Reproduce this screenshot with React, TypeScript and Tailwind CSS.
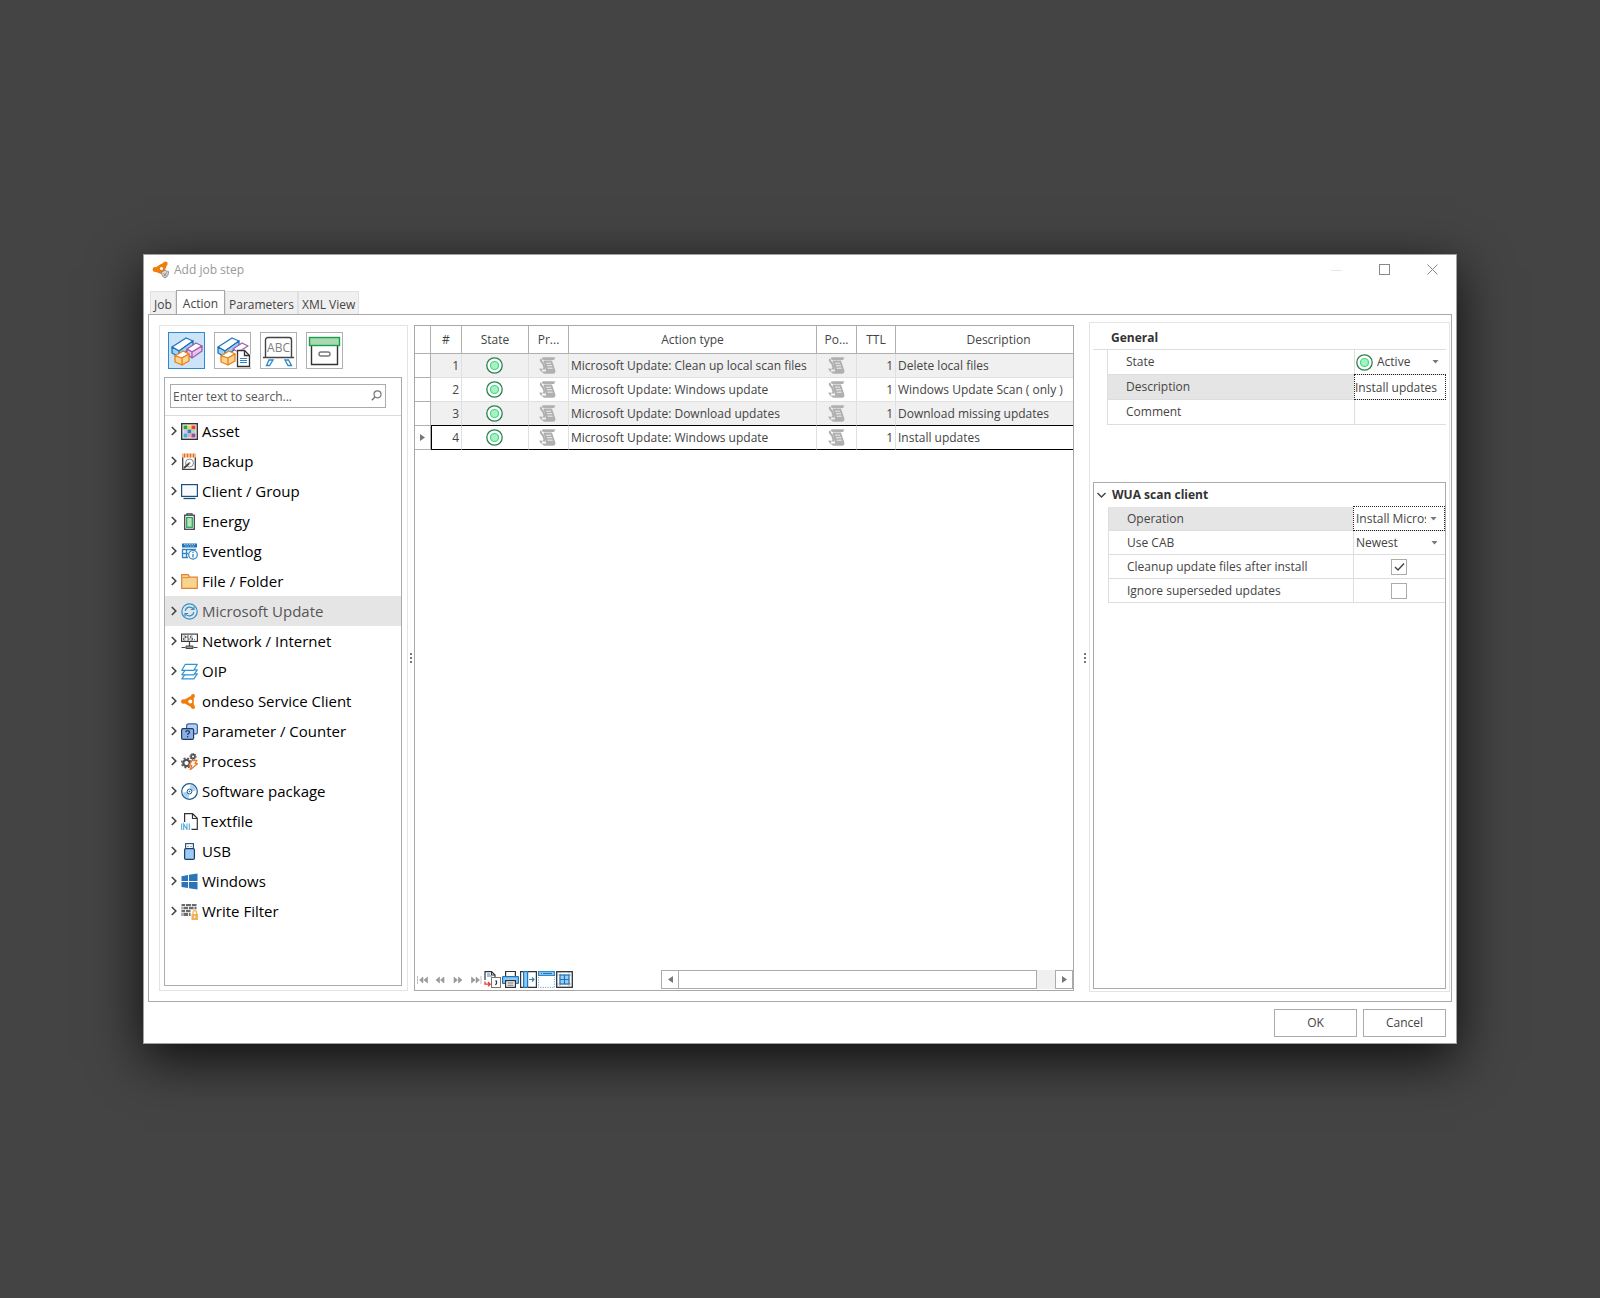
import { useState } from "react";
import type { ReactNode } from "react";
import clsx from "clsx";

/* ---------- icons ---------- */

function Icon({ children, size = 17 }: { children: ReactNode; size?: number }) {
  return (
    <svg width={size} height={size} viewBox={`0 0 ${size} ${size}`} fill="none" className="block shrink-0" aria-hidden="true">
      {children}
    </svg>
  );
}

function AppIcon() {
  return (
    <Icon size={18}>
      <path d="M2.5 8.5 13 2.5M2.5 9 9 11.5M13 3v3" stroke="#f07d0a" strokeWidth="2.6" strokeLinecap="round" />
      <circle cx="9.5" cy="7.5" r="2.8" fill="#fff" stroke="#f07d0a" strokeWidth="2.4" />
      <circle cx="3" cy="8.5" r="2.4" fill="#f07d0a" />
      <circle cx="13.5" cy="2.8" r="2.2" fill="#f07d0a" />
      <path d="M9.5 10.5c1.5 0 2.5-.5 3.5-1.5 1 1 2 1.5 3.5 1.5 0 3-1 5.5-3.5 6.5-2.5-1-3.5-3.5-3.5-6.5z" fill="#d6d6d6" stroke="#8a8a8a" />
      <path d="m11.5 12.5 3 2.5M14.5 11.5 12 15" stroke="#8a8a8a" />
    </Icon>
  );
}

function ChevronRight() {
  return (
    <svg width="6" height="10" viewBox="0 0 6 10" fill="none" className="shrink-0" aria-hidden="true">
      <path d="M.8 1 4.8 5l-4 4" stroke="#444" strokeWidth="1.6" />
    </svg>
  );
}

function Blocks({ small = false }: { small?: boolean }) {
  return (
    <g strokeLinejoin="round" strokeWidth="1.3">
      <g stroke="#1e75bb">
        <path d="m4 15 14-9 7 3-14 10z" fill="#fff" />
        <path d="M4 15v6l7 4v-6zM11 19l14-10v5L11 25z" fill="#9fd0f5" />
      </g>
      <g stroke="#a45cab">
        <path d="m19 17 9-6 6 3-10 6z" fill="#fff" />
        {!small && <path d="M19 17v5l5 4v-6zM24 20l10-6v5l-10 7z" fill="#e8c5ec" />}
      </g>
      <g stroke="#e8811c">
        <path d="m7 24 8-5 6 3-7 4z" fill="#fff" />
        <path d="M7 24v6l7 3v-7zM14 26l7-4v7l-7 4z" fill="#fbd591" />
      </g>
    </g>
  );
}

function BlocksIcon() {
  return <Icon size={37}><Blocks /></Icon>;
}

function BlocksDocIcon() {
  return (
    <Icon size={37}>
      <Blocks small />
      <path d="M24 19h7l5 5v10H24z" fill="#fff" stroke="#fff" strokeWidth="3" />
      <path d="M23.5 18.5h7l5 5v11h-12z" fill="#fff" stroke="#333" strokeWidth="1.3" />
      <path d="M30.5 18.5v5h5" stroke="#333" strokeWidth="1.3" />
      <path d="M26 26.500h7M26 28.500h7M26 30.500h7" stroke="#2f86c8" />
    </Icon>
  );
}

function BoardIcon() {
  return (
    <Icon size={37}>
      <path d="M5.500 25V8A2.500 2.500 0 0 1 8 5.500h21A2.500 2.500 0 0 1 31.500 8v17" stroke="#444" strokeWidth="1.4" />
      <path d="M3 25.500h31" stroke="#444" strokeWidth="1.5" />
      <text x="18.5" y="19.5" textAnchor="middle" fontSize="12" fill="#808080" fontFamily="'Open Sans', sans-serif">ABC</text>
      <path d="M9 28h4l-3.500 5.500h-3zM25 28h3.500l3 5.500H28z" fill="#fff" stroke="#2f86c8" strokeWidth="1.3" />
    </Icon>
  );
}

function ArchiveIcon() {
  return (
    <Icon size={37}>
      <path d="M5.500 14v18.500h26V14" stroke="#333" strokeWidth="1.4" fill="#fff" />
      <rect x="3.5" y="5.5" width="30" height="8" fill="#abd8b2" stroke="#16a04a" strokeWidth="1.4" />
      <rect x="13" y="20" width="11" height="4" rx="2" stroke="#777" strokeWidth="1.4" />
    </Icon>
  );
}

function SearchIcon() {
  return (
    <svg width="11" height="11" viewBox="0 0 11 11" fill="none" className="pointer-events-none absolute right-1 top-1.5" aria-hidden="true">
      <circle cx="6.5" cy="4.3" r="3.5" stroke="#777" strokeWidth="1.2" />
      <path d="M4 7 .8 10.2" stroke="#777" strokeWidth="1.5" />
    </svg>
  );
}

function AssetIcon() {
  const cells = ["#20a64a", "#f5d34f", "#e8413c", "#e6bdea", "#2f86c8", "#a5dcb0", "#33b5e0", "#f0a6b0", "#9a4aa6"];
  return (
    <Icon>
      <rect x=".7" y=".7" width="15.6" height="15.6" fill="#f4fbf6" stroke="#333" strokeWidth="1.4" />
      {cells.map((c, i) => (
        <rect key={c} x={2.5 + (i % 3) * 4} y={2.5 + Math.floor(i / 3) * 4} width="4" height="4" fill={c} />
      ))}
    </Icon>
  );
}

function BackupIcon() {
  return (
    <Icon>
      <path d="M1.700 4v12.300h12.600V4" stroke="#444" strokeWidth="1.3" fill="#fff" />
      <path d="M1 .5h14v4H1z" fill="#f6b98b" />
      <path d="M3.500.5v4M6.500.5v4M9.500.5v4M12.500.5v4" stroke="#e06f23" />
      <circle cx="8.5" cy="10" r="4" stroke="#888" />
      <circle cx="8.5" cy="10" r="1" fill="#888" />
      <path d="m3 15 5-4.500" stroke="#444" strokeWidth="1.8" />
    </Icon>
  );
}

function ClientIcon() {
  return (
    <Icon>
      <rect x=".6" y="1.6" width="15.8" height="11.8" fill="#f8fbfe" stroke="#1f5079" strokeWidth="1.2" />
      <path d="M2.500 15.500h12" stroke="#1f5079" strokeWidth="1.3" />
    </Icon>
  );
}

function EnergyIcon() {
  return (
    <Icon>
      <path d="M6 2V.8h5V2" stroke="#444" strokeWidth="1.3" />
      <rect x="3.7" y="2.2" width="9.6" height="14.1" fill="#fff" stroke="#444" strokeWidth="1.3" />
      <rect x="5.7" y="4.5" width="5.6" height="9.8" fill="#b9e2bf" stroke="#1ea355" strokeWidth="1.2" />
    </Icon>
  );
}

function EventlogIcon() {
  return (
    <Icon>
      <path d="M1 .5h15v4H1z" fill="#2471b5" />
      <path d="M3 1.500h11M4 3h9" stroke="#cfe5f7" strokeWidth=".7" strokeDasharray="1.5 1" />
      <path d="M1 6.500h14M1 10.500h6M1 14.500h6M1.500 6.500v8M5.500 6.500v8" stroke="#2f86c8" strokeWidth="1.3" />
      <circle cx="12" cy="11.8" r="4.3" fill="#fff" stroke="#2f86c8" strokeWidth="1.2" />
      <path d="M12 11v3.500M12 8.800V10" stroke="#2f86c8" strokeWidth="1.3" />
    </Icon>
  );
}

function FolderIcon() {
  return (
    <Icon>
      <path d="M.7 15.300V1.700h6.500l1.500 2.500h7.600v11.100z" fill="#f7d58d" stroke="#e0823a" strokeWidth="1.2" />
      <path d="M1.500 4.700H7l1.500-1" stroke="#e0823a" />
    </Icon>
  );
}

function UpdateIcon() {
  return (
    <Icon>
      <circle cx="8.5" cy="8.5" r="7.7" stroke="#2f8fce" strokeWidth="1.2" />
      <path d="M4.200 8A4.500 4.500 0 0 1 12.500 6.200M12.800 9A4.500 4.500 0 0 1 4.500 10.800" stroke="#2f8fce" strokeWidth="1.2" />
      <path d="M13 3.500v3H9.800M4 13.500v-3h3.200" stroke="#2f8fce" strokeWidth="1.2" />
    </Icon>
  );
}

function NetworkIcon() {
  return (
    <Icon>
      <rect x=".6" y="1.1" width="15.8" height="7.3" fill="#fff" stroke="#333" strokeWidth="1.1" />
      <path d="M2.500 3h2v2h-2v2h2M8 3H6v2h2v2H6M11.500 3h-2v2h2v2h-2M13 6.700h1" stroke="#444" strokeWidth=".8" />
      <path d="M8.500 8.500V13M.5 14.500h4M12.500 14.500h4" stroke="#444" strokeWidth="1.2" />
      <path d="M5 13h7v2.500H5z" fill="#999" stroke="#444" />
    </Icon>
  );
}

function LayersIcon() {
  return (
    <Icon>
      <g stroke="#2f95d0" strokeWidth="1.2" strokeLinejoin="round">
        <path d="m.8 15.800 3.500-5h12l-3.500 5z" fill="#fff" />
        <path d="m.8 11.800 3.500-5h12l-3.500 5z" fill="#fff" />
        <path d="m.8 7.300 3.500-6h12l-3.500 6z" fill="#fff" />
      </g>
    </Icon>
  );
}

function OndesoIcon() {
  return (
    <Icon>
      <path d="M2.200 8.500 11.800 3.200v10.600z" stroke="#f07d0a" strokeWidth="2" fill="#f07d0a" />
      <circle cx="2.3" cy="8.5" r="2.2" fill="#f07d0a" />
      <circle cx="12" cy="3" r="2" fill="#f07d0a" />
      <circle cx="12" cy="14" r="2" fill="#f07d0a" />
      <circle cx="9.3" cy="8.5" r="2" fill="#fff" />
    </Icon>
  );
}

function ParameterIcon() {
  return (
    <Icon>
      <rect x="5.6" y=".9" width="10.8" height="10" rx="2" fill="#b7cff5" stroke="#3267a8" strokeWidth="1.2" />
      <rect x=".6" y="5.6" width="12" height="10.8" rx="1.5" fill="#8db1e6" stroke="#213a5f" strokeWidth="1.2" />
      <path d="M4.800 9.200c0-2 3.700-2 3.700 0 0 1.300-1.900 1.200-1.900 2.700M6.600 13v1.300" stroke="#213a5f" strokeWidth="1.3" />
    </Icon>
  );
}

function ProcessIcon() {
  return (
    <Icon>
      <circle cx="5.5" cy="10" r="3.2" stroke="#555" strokeWidth="2.2" />
      <circle cx="5.5" cy="10" r="4.8" stroke="#555" strokeWidth="1.5" strokeDasharray="1.9 1.9" />
      <circle cx="12" cy="3.5" r="2" stroke="#555" strokeWidth="1.8" />
      <circle cx="12" cy="3.5" r="3.2" stroke="#555" strokeDasharray="1.2 1.2" />
      <path d="M11 7.500h5l-2 3.200h2.500L9 17l1.800-4.500H8.200z" fill="#fff" stroke="#ee7a2d" strokeWidth="1.3" strokeLinejoin="round" />
    </Icon>
  );
}

function DiscIcon() {
  return (
    <Icon>
      <circle cx="8.5" cy="8.5" r="7.8" fill="#fff" stroke="#1f5c92" strokeWidth="1.2" />
      <path d="M8.500 8.500 9.500 2A6.600 6.600 0 0 1 15 7.500zM8.500 8.500 7.500 15A6.600 6.600 0 0 1 2 9.500z" fill="#a5d0f3" />
      <circle cx="8.5" cy="8.5" r="2.4" fill="#fff" stroke="#1f5c92" />
      <circle cx="8.5" cy="8.5" r=".8" fill="#1f5c92" />
    </Icon>
  );
}

function TextfileIcon() {
  return (
    <Icon>
      <path d="M3.600 9V.7h8l4.700 4.500v11.100h-5.800" stroke="#333" strokeWidth="1.2" />
      <path d="M11.500 1v4.500H16" stroke="#333" strokeWidth="1.2" />
      <path d="M.7 10.500V17M2.700 17v-6L6 16.500v-6M8.300 10.500V17" stroke="#58a9dc" strokeWidth="1.1" />
    </Icon>
  );
}

function UsbIcon() {
  return (
    <Icon>
      <rect x="4.6" y=".6" width="7.8" height="6" fill="#fff" stroke="#2a5a8c" strokeWidth="1.2" />
      <path d="M6.500 3.500h1M9.500 3.500h1" stroke="#2a5a8c" />
      <rect x="3.6" y="5.6" width="9.8" height="10.8" rx="1.2" fill="#9bcbf7" stroke="#1d3f66" strokeWidth="1.2" />
    </Icon>
  );
}

function WindowsIcon() {
  return (
    <Icon>
      <path d="M.5 3.200 7 2v6H.5zM8 1.800 16.500.5V8H8zM.5 9H7v6L.5 14zM8 9h8.500v7.500L8 15.200z" fill="#2b74b8" />
    </Icon>
  );
}

function WriteFilterIcon() {
  return (
    <Icon>
      <path d="M.5 1h15v12H.5z" fill="#6b6b6b" />
      <path d="M0 3.500h16M0 6.500h16M0 9.500h16" stroke="#fff" strokeWidth=".7" />
      <path d="M4.500 1v2.500M10.500 1v2.500M2 3.500v3M7.500 3.500v3M13 3.500v3M4.500 6.500v3M10.500 6.500v3M2 9.500V13M7.500 9.500V13" stroke="#fff" strokeWidth=".9" />
      <path d="M9.500 7h7.500v10H9.500z" fill="#fff" />
      <rect x="10.5" y="11" width="6.500" height="6" fill="#f0b158" />
      <path d="M12 11V9.500a1.800 1.800 0 0 1 3.600 0V11" stroke="#f0b158" strokeWidth="1.3" />
      <path d="M13.700 12.700V15" stroke="#fff" strokeWidth="1.1" />
    </Icon>
  );
}

function StateIcon() {
  return (
    <Icon>
      <circle cx="8.5" cy="8.5" r="7.7" fill="#fff" stroke="#2d8050" strokeWidth="1.3" />
      <circle cx="8.5" cy="8.5" r="4" fill="#a6f2c2" stroke="#3fdc7c" strokeWidth="1.2" />
    </Icon>
  );
}

function ScriptIcon() {
  return (
    <Icon>
      <path d="M3 .8C5 0 9 .4 16.500.4L15 3H5C3.500 3 2 2 3 .8z" fill="#b0b0b0" />
      <path d="M2 2C.8 4.500 3.500 5 4.300 7l1.200 4-1 1.500" stroke="#b0b0b0" strokeWidth="2" />
      <path d="M4.500 3.500H13L16.200 13c.8 2.200-.4 3.700-2.200 3.700H6c-1.800 0-3-1-3-2.200h4z" fill="#b0b0b0" />
      <path d="M7.200 6.200H12M8 8.700h5M8.700 11.200h5" stroke="#f4f4f4" strokeWidth=".9" />
      <path d="m.2 11.600 3.600.2-1.600 3.400z" fill="#b0b0b0" />
    </Icon>
  );
}

function ExportIcon() {
  return (
    <Icon>
      <path d="M1 9V.6h6.500L11 4v3" stroke="#333" strokeWidth="1.2" />
      <path d="M7.500.6V4H11" stroke="#333" />
      <path d="M3 3h3M3 5h5" stroke="#2f86c8" />
      <path d="M1 10.500v2.700h4.500M4 11l2.200 2.200L4 15.400" stroke="#e23b3b" strokeWidth="1.3" />
      <rect x="7.500" y="6.500" width="9" height="10" fill="#fff" stroke="#777" />
      <path d="M11.200 10h1.300v2.300l-1 1.700" stroke="#333" strokeWidth="1.2" />
    </Icon>
  );
}

function PrinterIcon() {
  return (
    <Icon>
      <path d="M3.600 5.500v-5h9.800v5" fill="#fff" stroke="#333" strokeWidth="1.2" />
      <rect x=".6" y="5.6" width="15.8" height="6.8" rx=".5" fill="#8cc8f5" stroke="#1e75bb" strokeWidth="1.2" />
      <path d="M3.600 9.600h9.800v6.800H3.600z" fill="#fff" stroke="#333" strokeWidth="1.2" />
      <path d="M5.500 12h6M5.500 14.200h6" stroke="#666" />
    </Icon>
  );
}

function ColumnsIcon() {
  return (
    <Icon>
      <path d="M.6 0v17M.6.6H4M.6 16.400H4M8 .6h8.400v15.800H8" stroke="#333" strokeWidth="1.2" />
      <rect x="3.6" y=".6" width="4" height="15.8" fill="#8cc8f5" stroke="#1e75bb" strokeWidth="1.2" />
      <path d="M9 8.500h5M12 6.500l2 2-2 2" stroke="#2f86c8" strokeWidth="1.2" />
    </Icon>
  );
}

function HeaderIcon() {
  return (
    <Icon>
      <rect x=".6" y=".6" width="15.8" height="3.8" fill="#9ed0f5" stroke="#2f86c8" strokeWidth="1.2" />
      <path d="M3 2.500h1M5 2.500h9" stroke="#1e75bb" />
      <path d="M.6 6v10.400h15.800V6" stroke="#6ca7d4" strokeDasharray="1.2 1.2" />
    </Icon>
  );
}

function GridIcon() {
  return (
    <Icon>
      <rect x=".7" y=".7" width="15.6" height="15.6" fill="#fff" stroke="#333" strokeWidth="1.3" />
      <path d="M1 4h15M1 13h15M4 1v15M13 1v15" stroke="#999" strokeDasharray="1.5 1" />
      <rect x="4" y="4" width="9" height="9" fill="#9ed0f5" stroke="#1e75bb" strokeWidth="1.2" />
      <path d="M8.500 4v9M4 8.500h9" stroke="#1e75bb" strokeWidth="1.2" />
    </Icon>
  );
}

function Triangle({ dir }: { dir: "left" | "right" }) {
  return (
    <svg width="5" height="7" viewBox="0 0 5 7" className="block" aria-hidden="true">
      <path d={dir === "left" ? "M5 0v7L0 3.5z" : "M0 0v7l5-3.5z"} fill="#777" />
    </svg>
  );
}

/* ---------- data ---------- */

const tabs = ["Job", "Action", "Parameters", "XML View"];

const tools = [
  { name: "Actions", icon: <BlocksIcon /> },
  { name: "Action templates", icon: <BlocksDocIcon /> },
  { name: "Texts", icon: <BoardIcon /> },
  { name: "Archive", icon: <ArchiveIcon /> },
];

const categories = [
  { name: "Asset", icon: <AssetIcon /> },
  { name: "Backup", icon: <BackupIcon /> },
  { name: "Client / Group", icon: <ClientIcon /> },
  { name: "Energy", icon: <EnergyIcon /> },
  { name: "Eventlog", icon: <EventlogIcon /> },
  { name: "File / Folder", icon: <FolderIcon /> },
  { name: "Microsoft Update", icon: <UpdateIcon /> },
  { name: "Network / Internet", icon: <NetworkIcon /> },
  { name: "OIP", icon: <LayersIcon /> },
  { name: "ondeso Service Client", icon: <OndesoIcon /> },
  { name: "Parameter / Counter", icon: <ParameterIcon /> },
  { name: "Process", icon: <ProcessIcon /> },
  { name: "Software package", icon: <DiscIcon /> },
  { name: "Textfile", icon: <TextfileIcon /> },
  { name: "USB", icon: <UsbIcon /> },
  { name: "Windows", icon: <WindowsIcon /> },
  { name: "Write Filter", icon: <WriteFilterIcon /> },
];

const steps = [
  { id: 1, action: "Microsoft Update: Clean up local scan files", ttl: 1, description: "Delete local files" },
  { id: 2, action: "Microsoft Update: Windows update", ttl: 1, description: "Windows Update Scan ( only )" },
  { id: 3, action: "Microsoft Update: Download updates", ttl: 1, description: "Download missing updates" },
  { id: 4, action: "Microsoft Update: Windows update", ttl: 1, description: "Install updates" },
];

const navButtons = [
  { name: "First", d: "M.5 0v8M6 1v6L2.500 4zM10.500 1v6L7 4z" },
  { name: "Previous page", d: "M4.500 1v6L1 4zM9 1v6L5.500 4z" },
  { name: "Next page", d: "M1 1v6l3.500-3zM5.500 1v6L9 4z" },
  { name: "Last", d: "M.5 1v6L4 4zM5 1v6l3.500-3zM10 0v8" },
];

const gridTools = [
  { name: "Export", icon: <ExportIcon /> },
  { name: "Print", icon: <PrinterIcon /> },
  { name: "Best fit columns", icon: <ColumnsIcon /> },
  { name: "Group panel", icon: <HeaderIcon /> },
  { name: "Grid view", icon: <GridIcon /> },
];

/* ---------- parts ---------- */

function Splitter({ className }: { className?: string }) {
  return (
    <div className={clsx("flex shrink-0 flex-col justify-center gap-0.5", className)}>
      <span className="size-0.5 bg-[#777]" />
      <span className="size-0.5 bg-[#777]" />
      <span className="size-0.5 bg-[#777]" />
    </div>
  );
}

function TitleBar() {
  return (
    <header className="flex h-[35px] items-start pl-1 pr-3.5 pt-1.5">
      <AppIcon />
      <h1 className="ml-1 leading-[18px] text-[#999]">Add job step</h1>
      <div className="ml-auto mt-[3px] flex gap-[37px]">
        <button aria-label="Minimize" disabled>
          <Icon size={11}><path d="M0 6.500h11" stroke="#e6e6e6" /></Icon>
        </button>
        <button aria-label="Maximize">
          <Icon size={11}><rect x=".5" y=".5" width="10" height="10" stroke="#888" /></Icon>
        </button>
        <button aria-label="Close">
          <Icon size={11}><path d="m.5.5 10 10M10.500.5l-10 10" stroke="#888" /></Icon>
        </button>
      </div>
    </header>
  );
}

function ActionTree() {
  const [selected, setSelected] = useState("Microsoft Update");
  return (
    <aside className="my-2.5 flex w-[249px] shrink-0 flex-col border border-[#e4e4e4]">
      <div className="flex gap-[9px] pl-2 pt-1.5">
        {tools.map((t, i) => (
          <button
            key={t.name}
            aria-label={t.name}
            className={clsx("flex size-[37px] items-center justify-center border", i === 0 ? "border-[#3088cf] bg-[#cce4f7]" : "border-[#b0b0b0] bg-white")}
          >
            {t.icon}
          </button>
        ))}
      </div>
      <div className="mb-1 ml-1 mr-[5px] mt-2 flex-1 border border-[#ababab]">
        <div className="border-b border-[#dcdcdc] pb-[7px] pl-[5px] pr-[15px] pt-1.5">
          <div className="relative">
            <input
              type="text"
              aria-label="Search actions"
              placeholder="Enter text to search..."
              className="block h-6 w-full border border-[#ababab] pl-0.5 pr-5 text-[12px] text-[#444] outline-none placeholder:text-[#555]"
            />
            <SearchIcon />
          </div>
        </div>
        <ul>
          {categories.map((c) => (
            <li key={c.name}>
              <button
                onClick={() => setSelected(c.name)}
                className={clsx("flex h-[30px] w-full items-center gap-1 pl-1.5 text-left text-[15px]", c.name === selected ? "bg-[#e5e5e5] text-[#555]" : "text-black")}
              >
                <ChevronRight />
                {c.icon}
                <span>{c.name}</span>
              </button>
            </li>
          ))}
        </ul>
      </div>
    </aside>
  );
}

function StepTable() {
  const th = "border-b border-r border-[#b0b0b0] font-normal";
  return (
    <table className="w-full min-w-[687px] table-fixed border-separate border-spacing-0">
      <colgroup>
        <col className="w-4" />
        <col className="w-[31px]" />
        <col className="w-[67px]" />
        <col className="w-10" />
        <col className="w-[248px]" />
        <col className="w-10" />
        <col className="w-[39px]" />
        <col />
      </colgroup>
      <thead>
        <tr className="h-7">
          <th className={th} />
          <th className={th}>#</th>
          <th className={th}>State</th>
          <th className={th}>Pr...</th>
          <th className={th}>Action type</th>
          <th className={th}>Po...</th>
          <th className={th}>TTL</th>
          <th className={th}>Description</th>
        </tr>
      </thead>
      <tbody>
        {steps.map((s, i) => {
          const td = clsx("border-b border-r border-r-[#e0e0e0]", i < 2 ? "border-b-[#e0e0e0]" : "border-b-black");
          return (
            <tr key={s.id} className={clsx("h-6", i % 2 === 0 ? "bg-[#f0f0f0]" : "bg-white")}>
              <td className="border-b border-r border-[#b0b0b0] bg-white">
                {i === 3 && <div className="flex justify-center"><Triangle dir="right" /></div>}
              </td>
              <td className={clsx(td, "pr-0.5 text-right", i === 3 && "border-l border-l-black")}>{s.id}</td>
              <td className={td}><div className="flex justify-center pr-0.5"><StateIcon /></div></td>
              <td className={td}><div className="flex justify-center pr-0.5"><ScriptIcon /></div></td>
              <td className={clsx(td, "truncate pl-0.5")}>{s.action}</td>
              <td className={td}><div className="flex justify-center"><ScriptIcon /></div></td>
              <td className={clsx(td, "pr-0.5 text-right")}>{s.ttl}</td>
              <td className={clsx(td, "pl-0.5")}>{s.description}</td>
            </tr>
          );
        })}
      </tbody>
    </table>
  );
}

function StepGrid() {
  return (
    <section className="my-2.5 flex min-w-0 flex-1 flex-col overflow-hidden border border-[#a8a8a8]">
      <StepTable />
      <div className="mt-auto flex h-5 items-start pl-0.5">
        <div className="flex h-[19px] items-center gap-[7px]">
          {navButtons.map((b) => (
            <button key={b.name} aria-label={b.name}>
              <svg width="11" height="8" viewBox="0 0 11 8" fill="#999" stroke="#999" strokeWidth=".6" className="block">
                <path d={b.d} />
              </svg>
            </button>
          ))}
        </div>
        <div className="ml-0.5 flex gap-px pt-px">
          {gridTools.map((t) => (
            <button key={t.name} aria-label={t.name}>{t.icon}</button>
          ))}
        </div>
        <div className="ml-[88px] flex h-[19px] flex-1 bg-[#f0f0f0]">
          <button aria-label="Scroll left" className="flex w-[18px] items-center justify-center border border-[#ababab] bg-white">
            <Triangle dir="left" />
          </button>
          <div className="flex-1 border border-l-0 border-[#ababab] bg-white" />
          <button aria-label="Scroll right" className="ml-[18px] flex w-[18px] items-center justify-center border border-[#ababab] bg-white">
            <Triangle dir="right" />
          </button>
        </div>
      </div>
    </section>
  );
}

function DropArrow() {
  return (
    <div className="pointer-events-none absolute inset-y-0 right-[7px] flex items-center">
      <svg width="7" height="4" viewBox="0 0 7 4" aria-hidden="true">
        <path d="M.5 0h6l-3 3.500z" fill="#777" />
      </svg>
    </div>
  );
}

function PropertyRow({ id, label, active, tall, children }: { id: string; label: string; active?: boolean; tall?: boolean; children: ReactNode }) {
  return (
    <div className={clsx("flex border-b border-[#dedede]", tall ? "h-[25px]" : "h-6")}>
      <div className="-mb-px w-[15px] shrink-0 border-r border-[#dedede] bg-white" />
      <label htmlFor={id} className={clsx("flex flex-1 items-center pl-[18px]", active && "bg-[#e5e5e5]")}>{label}</label>
      <div
        className={clsx(
          "relative flex w-[92px] shrink-0 items-center",
          active ? "-my-px border border-dotted border-[#222]" : "border-l border-[#dedede]",
        )}
      >
        {children}
      </div>
    </div>
  );
}

function Properties() {
  const select = "h-full w-full appearance-none overflow-hidden bg-transparent pl-0.5 pr-[18px] text-clip whitespace-nowrap text-[#444] outline-none";
  const check = "peer size-4 appearance-none border border-[#ababab] bg-white";
  return (
    <aside className="mb-[9px] mt-[7px] flex w-[361px] shrink-0 flex-col border border-[#e4e4e4] px-[3px] pb-0.5">
      <section>
        <h2 className="flex h-[27px] items-center border-b border-[#dedede] pl-[18px] pt-1 font-bold text-[#333]">General</h2>
        <PropertyRow id="state" label="State" tall>
          <div className="pl-px"><StateIcon /></div>
          <select id="state" className={clsx(select, "ml-0.5")}>
            <option>Active</option>
            <option>Inactive</option>
          </select>
          <DropArrow />
        </PropertyRow>
        <PropertyRow id="description" label="Description" active tall>
          <input id="description" type="text" defaultValue="Install updates" className="h-full w-full outline-none" />
        </PropertyRow>
        <PropertyRow id="comment" label="Comment" tall>
          <input id="comment" type="text" className="h-full w-full pl-0.5 outline-none" />
        </PropertyRow>
      </section>
      <section className="mt-[57px] flex-1 border border-[#ababab]">
        <h2 className="flex h-6 items-center gap-1.5 pl-[3px] font-bold text-[#333]">
          <svg width="9" height="6" viewBox="0 0 9 6" fill="none" aria-hidden="true">
            <path d="m.5 1 4 4 4-4" stroke="#444" strokeWidth="1.4" />
          </svg>
          WUA scan client
        </h2>
        <PropertyRow id="operation" label="Operation" active>
          <select id="operation" className={select}>
            <option>Install Microsoft updates</option>
          </select>
          <DropArrow />
        </PropertyRow>
        <PropertyRow id="cab" label="Use CAB">
          <select id="cab" className={select}>
            <option>Newest</option>
          </select>
          <DropArrow />
        </PropertyRow>
        <PropertyRow id="cleanup" label="Cleanup update files after install">
          <div className="flex w-full justify-center pr-0.5">
            <div className="relative">
              <input id="cleanup" type="checkbox" defaultChecked className={clsx(check, "block")} />
              <svg width="16" height="16" viewBox="0 0 16 16" fill="none" className="pointer-events-none absolute inset-0 hidden peer-checked:block">
                <path d="m4 8 3 3 6-6.500" stroke="#444" strokeWidth="1.4" />
              </svg>
            </div>
          </div>
        </PropertyRow>
        <PropertyRow id="superseded" label="Ignore superseded updates">
          <div className="flex w-full justify-center pr-0.5">
            <input id="superseded" type="checkbox" className={check} />
          </div>
        </PropertyRow>
      </section>
    </aside>
  );
}

export default function App() {
  const [tab, setTab] = useState("Action");
  return (
    <main className="flex min-h-screen bg-[#444] px-[143px] py-[254px] font-['Open_Sans','Noto_Sans',sans-serif] text-[12px] leading-4 text-[#444]">
      <div role="dialog" aria-label="Add job step" className="flex min-w-0 flex-1 flex-col border border-[#a0a0a0] bg-white px-1 shadow-[0_15px_50px_rgba(0,0,0,0.8)]">
        <TitleBar />
        <div role="tablist" className="flex h-6 items-end pl-0.5">
          {tabs.map((t) => (
            <button
              key={t}
              role="tab"
              aria-selected={t === tab}
              onClick={() => setTab(t)}
              className={clsx(
                "border border-b-0",
                t === tab ? "-mb-px h-[25px] border-[#a8a8a8] bg-white px-1.5 pt-0.5" : "h-[23px] border-[#e0e0e0] bg-[#f0f0f0] px-[3px] pt-[3px]",
              )}
            >
              {t}
            </button>
          ))}
        </div>
        <div className="flex flex-1 border border-[#a8a8a8] pl-2.5 pr-px">
          <ActionTree />
          <Splitter className="w-1.5 pl-0.5" />
          <StepGrid />
          <Splitter className="w-[15px] pl-2.5" />
          <Properties />
        </div>
        <footer className="flex justify-end gap-1.5 pb-1.5 pr-1.5 pt-[7px]">
          <button className="h-7 w-[83px] border border-[#ababab]">OK</button>
          <button className="h-7 w-[83px] border border-[#ababab]">Cancel</button>
        </footer>
      </div>
    </main>
  );
}
